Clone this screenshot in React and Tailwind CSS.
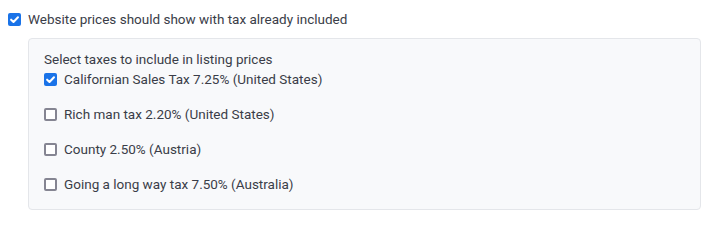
import React, { useState } from "react";

function Box({ checked, onChange }) {
  return (
    <span
      onClick={onChange}
      className={
        "inline-flex h-[13px] w-[13px] shrink-0 items-center justify-center rounded-[2px] " +
        (checked ? "bg-[#1a73e8]" : "border-2 border-[#858592] bg-white")
      }
    >
      {checked && (
        <svg width="11" height="11" viewBox="0 0 12 12" fill="none">
          <path d="M2.3 6.2 L4.9 8.7 L9.8 3.5" stroke="white" strokeWidth="2.2" strokeLinecap="round" strokeLinejoin="round" />
        </svg>
      )}
    </span>
  );
}

export default function App() {
  const [main, setMain] = useState(true);
  const [taxes, setTaxes] = useState([
    { label: "Californian Sales Tax 7.25% (United States)", on: true },
    { label: "Rich man tax 2.20% (United States)", on: false },
    { label: "County 2.50% (Austria)", on: false },
    { label: "Going a long way tax 7.50% (Australia)", on: false },
  ]);
  return (
    <div className="w-[710px] h-[220px] bg-white text-[13.5px] text-[#3a3d48]" style={{ fontFamily: "Roboto, sans-serif" }}>
      <div className="pl-[8px] pt-[11px] pr-[9px]">
        <label className="flex items-center gap-[7px] h-[16px]">
          <Box checked={main} onChange={() => setMain(!main)} />
          <span>Website prices should show with tax already included</span>
        </label>
        <div className="mt-[11px] ml-[20px] h-[172px] rounded-[4px] border border-[#e4e6ea] bg-[#f8f9fb] pl-[15px] pt-[12px]">
          <div className="leading-[16px]">Select taxes to include in listing prices</div>
          <div className="flex flex-col gap-[19px] mt-[4px]">
            {taxes.map((t, i) => (
              <label key={i} className="flex items-center gap-[7px] h-[16px]">
                <Box
                  checked={t.on}
                  onChange={() => setTaxes(taxes.map((x, j) => (j === i ? { ...x, on: !x.on } : x)))}
                />
                <span>{t.label}</span>
              </label>
            ))}
          </div>
        </div>
      </div>
    </div>
  );
}
